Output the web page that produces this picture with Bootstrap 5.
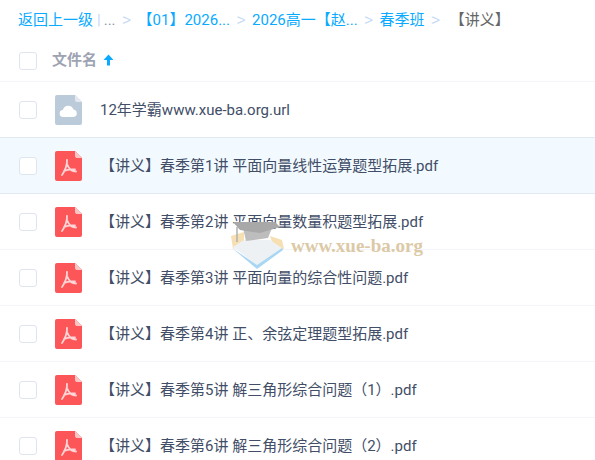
<!DOCTYPE html>
<html lang="zh-CN">
<head>
  <meta charset="UTF-8" />
  <meta name="viewport" content="width=device-width, initial-scale=1.0"/>
  <title>文件列表</title>
  <link href="https://cdn.jsdelivr.net/npm/bootstrap@5.3.0/dist/css/bootstrap.min.css" rel="stylesheet" />
  <style>
    html, body { height: 460px; overflow: hidden; }
    body {
      background: #fff;
      color: #424e67;
      font-family: Roboto, "Noto Sans CJK SC", sans-serif;
      font-size: 15px;
    }
    .crumbs { height: 41px; padding-left: 18px; white-space: nowrap; }
    .crumbs a { color: #09aaff; text-decoration: none; }
    .crumbs .sep { color: #c4d8f4; font-family: "Liberation Sans", sans-serif; width: 22px; text-align: center; flex: none; }
    .crumbs .bar { color: #c4d8f4; margin: 0 3px 0 4px; }
    .crumbs .dots { color: #8c95a8; }
    .crumbs .here { color: #666; margin-left: 3px; }
    .head-row { height: 41px; padding-left: 19px; border-bottom: 1px solid #f4f5fb; }
    .head-row .name { color: #9ea3b3; font-weight: 700; margin-left: 15px; margin-bottom: 2px; }
    .head-row .sort-up { margin-left: 6px; margin-bottom: 2px; }
    .tick {
      width: 18px; height: 18px; flex: none;
      border: 1px solid #dfe5ee; border-radius: 3px; background: #fff;
    }
    .file-row { height: 56px; padding-left: 19px; border-bottom: 1px solid #f4f5fb; white-space: nowrap; }
    .file-row.active-row { background: #f2faff; border-bottom-color: #dfeaf5; border-top: 1px solid #dfeaf5; margin-top: -1px; height: 57px; }
    .file-icon { width: 27px; height: 30px; flex: none; margin-left: 18px; }
    .file-name { margin-left: 18px; padding-top: 2px; }
    .stamp { position: absolute; left: 230px; top: 218px; pointer-events: none; }
    .stamp-text {
      position: absolute; left: 61px; top: 14px; white-space: nowrap;
      color: #dcc9a6; font-family: "Liberation Serif", serif; font-weight: 700; font-size: 19px;
    }
  </style>
</head>
<body>

  <svg width="0" height="0" class="position-absolute">
    <symbol id="pdf-icon" viewBox="0 0 27 30">
      <path d="M2 0H20L27 7V28a2 2 0 0 1-2 2H2a2 2 0 0 1-2-2V2a2 2 0 0 1 2-2Z" fill="#fd5659"/>
      <path d="M20 0V5a2 2 0 0 0 2 2H27Z" fill="#fec5c6"/>
      <path d="M12 9C12.500 13 10 20 7 24M12.500 14C14 18 17 20.500 21 20.500M9 20C12 18.500 16 18 20 18.500" fill="none" stroke="#fff" stroke-opacity=".75" stroke-width="1.800" stroke-linecap="round"/>
    </symbol>
  </svg>

  <div class="crumbs d-flex align-items-center">
    <a href="#">返回上一级</a><span class="bar">|</span><span class="dots">...</span>
    <span class="sep">&gt;</span><a href="#">【01】2026...</a>
    <span class="sep">&gt;</span><a href="#">2026高一【赵...</a>
    <span class="sep">&gt;</span><a href="#">春季班</a>
    <span class="sep">&gt;</span><span class="here">【讲义】</span>
  </div>

  <div class="head-row d-flex align-items-center">
    <span class="tick"></span>
    <span class="name">文件名</span>
    <svg class="sort-up" width="11" height="12" viewBox="0 0 11 12"><path d="M5.500 0.500L10.500 6H7V11.500H4V6H0.500Z" fill="#09aaff"/></svg>
  </div>

  <div class="file-row d-flex align-items-center">
    <span class="tick"></span>
    <svg class="file-icon" viewBox="0 0 27 30">
      <path d="M2 0H20L27 7V28a2 2 0 0 1-2 2H2a2 2 0 0 1-2-2V2a2 2 0 0 1 2-2Z" fill="#bccbd9"/>
      <path d="M20 0V5a2 2 0 0 0 2 2H27Z" fill="#e3e9ef"/>
      <path d="M8.500 22a3.500 3.500 0 0 1-.6-7A5.500 5.500 0 0 1 18.500 14.500a3.800 3.800 0 0 1 .2 7.500Z" fill="#fff"/>
    </svg>
    <span class="file-name">12年学霸www.xue-ba.org.url</span>
  </div>

  <div id="rows"></div>

  <div class="stamp">
    <svg width="62" height="56" viewBox="0 0 62 56">
      <path d="M1 18L14 14V26L3 31Z" fill="#f6dfb2"/>
      <path d="M40 18L52 22L54 31L44 30Z" fill="#f6dfb2"/>
      <path d="M3 29L14 22L40 22L52 30L27 47Z" fill="#eef1f3"/>
      <path d="M2 30L27 47L52 30L53 32L27 51Z" fill="#a9d6f2"/>
      <path d="M13 10L42 10L38 20L16 23Z" fill="#bdbdbd"/>
      <path d="M3 4L45 4L50 9L30 15L10 12Z" fill="#a8a8a8"/>
      <path d="M7 9V24" stroke="#b0b0b0" stroke-width="1.500"/>
    </svg>
    <span class="stamp-text">www.xue-ba.org</span>
  </div>

  <script>
    // 列表数据
    const files = [
      '【讲义】春季第1讲 平面向量线性运算题型拓展.pdf',
      '【讲义】春季第2讲 平面向量数量积题型拓展.pdf',
      '【讲义】春季第3讲 平面向量的综合性问题.pdf',
      '【讲义】春季第4讲 正、余弦定理题型拓展.pdf',
      '【讲义】春季第5讲 解三角形综合问题（1）.pdf',
      '【讲义】春季第6讲 解三角形综合问题（2）.pdf'
    ];
    document.getElementById('rows').innerHTML = files.map((name, i) => `
      <div class="file-row d-flex align-items-center ${i === 0 ? 'active-row' : ''}">
        <span class="tick"></span>
        <svg class="file-icon"><use href="#pdf-icon"/></svg>
        <span class="file-name">${name}</span>
      </div>`).join('');
  </script>
  <script src="https://cdn.jsdelivr.net/npm/bootstrap@5.3.0/dist/js/bootstrap.bundle.min.js"></script>
</body>
</html>
